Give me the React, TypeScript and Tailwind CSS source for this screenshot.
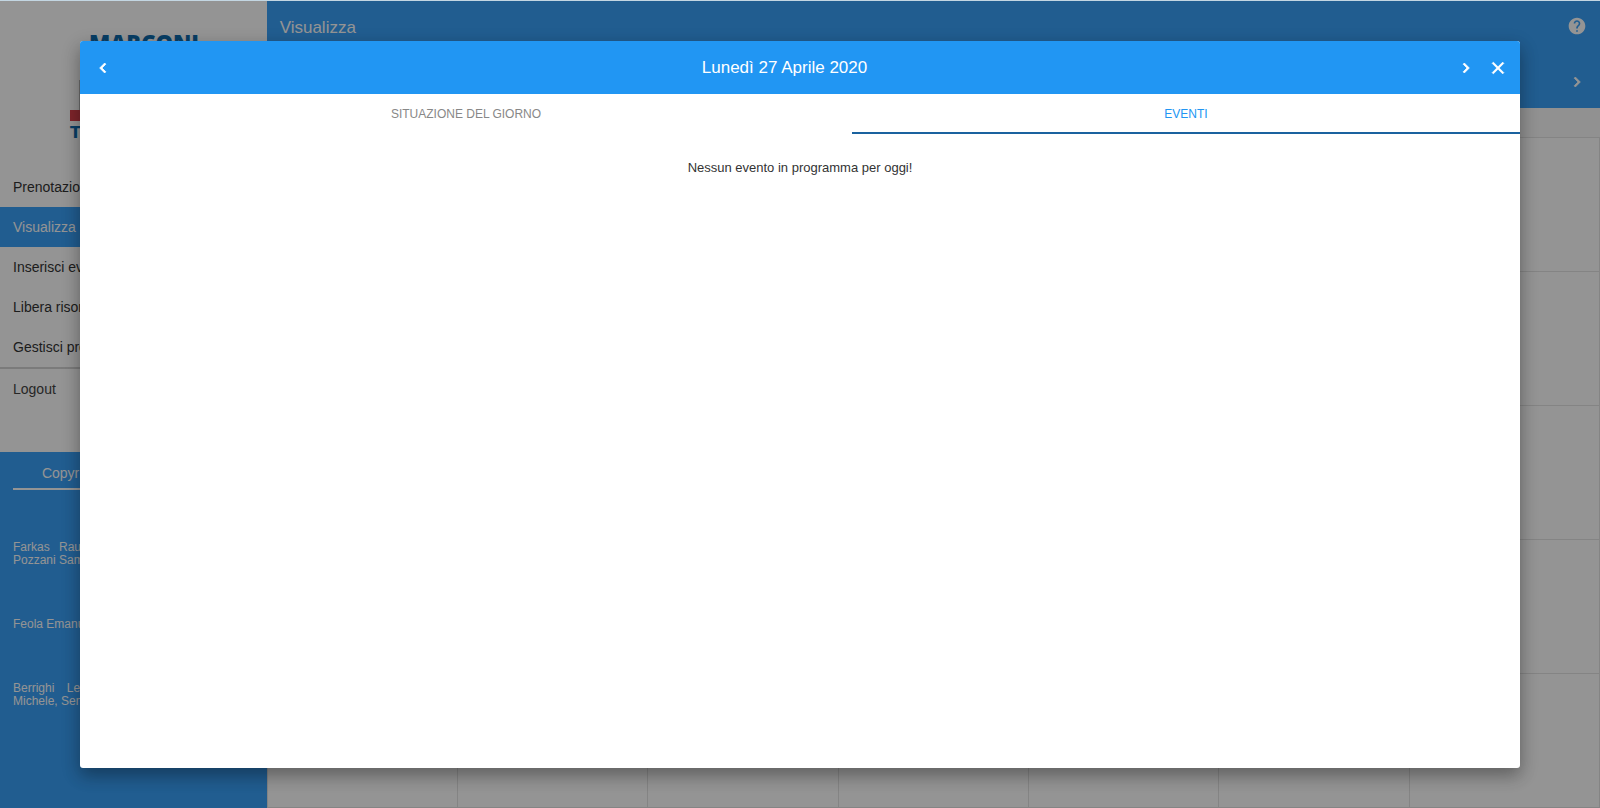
import { MdHelp } from "react-icons/md";

const links = [
  { label: "Prenotazioni", active: false },
  { label: "Visualizza", active: true },
  { label: "Inserisci evento", active: false },
  { label: "Libera risorse", active: false },
  { label: "Gestisci prenotazioni", active: false },
];

const credits = [
  "Farkas Raul, Rossi Luca, Zanoni Mario, Pozzani Samuele",
  "Feola Emanuele",
  "Berrighi Leonardo, Sala Davide, Tosini Michele, Sempreboni Luca",
];

const glyphs = {
  left: "M15.41 7.41 14 6l-6 6 6 6 1.41-1.41L10.83 12z",
  right: "M10 6 8.59 7.41 13.17 12l-4.58 4.59L10 18l6-6z",
  close:
    "M19 6.41 17.59 5 12 10.59 6.41 5 5 6.41 10.59 12 5 17.59 6.41 19 12 13.41 17.59 19 19 17.59 13.41 12z",
};

function Glyph({ name }: { name: keyof typeof glyphs }) {
  return (
    <svg width="20" height="20" viewBox="0 0 24 24" fill="currentColor" stroke="currentColor" strokeWidth="0.9" aria-hidden="true">
      <path d={glyphs[name]} />
    </svg>
  );
}

function Logo() {
  return (
    <div className="flex h-[166px] shrink-0 justify-center pt-7">
      <svg width="130" height="120" viewBox="0 0 130 120" role="img" aria-label="Marconi">
        <text x="76" y="22" textAnchor="middle" fontSize="22" fontWeight="800" fill="#0f6cae" fontFamily="Open Sans, Noto Sans, sans-serif">
          MARCONI
        </text>
        <rect x="11" y="51" width="108" height="30" fill="#bbb" />
        <rect x="2" y="81" width="126" height="11" fill="#d9404a" />
        <text x="2" y="109" fontSize="16" fontWeight="700" fill="#0f6cae" fontFamily="DejaVu Sans, sans-serif">
          TECNICO
        </text>
      </svg>
    </div>
  );
}

function Sidebar() {
  return (
    <aside className="flex w-1/6 shrink-0 flex-col bg-white">
      <Logo />
      <nav className="flex flex-col text-sm text-[#333]">
        {links.map((l) => (
          <a
            key={l.label}
            href="#"
            className={
              l.active
                ? "flex h-10 items-center bg-[#39a0f8] px-[13px] text-white"
                : "flex h-10 items-center px-[13px]"
            }
          >
            {l.label}
          </a>
        ))}
        <a href="#" className="flex h-[42px] items-center border-t-2 border-[#d4d4d4] px-[13px] text-[#444]">
          Logout
        </a>
      </nav>
      <footer className="mt-[43px] flex-1 bg-[#39a0f8] px-[13px] text-white">
        <div className="border-b-2 border-white pt-[11px] pb-[5px] text-center text-sm leading-5">
          Copyright © Team 2019-2020
        </div>
        {credits.map((names) => (
          <p key={names} className="mt-[51px] text-justify text-xs leading-[13px]">
            {names}
          </p>
        ))}
      </footer>
    </aside>
  );
}

function Calendar() {
  return (
    <main className="flex flex-1 flex-col bg-white">
      <header className="flex h-[107px] shrink-0 flex-col justify-between bg-[#39a0f8] px-[13px] text-white">
        <div className="flex h-[50px] items-center justify-between">
          <h1 className="pt-1 text-[17px]">Visualizza</h1>
          <button type="button" aria-label="Aiuto">
            <MdHelp size={20} />
          </button>
        </div>
        <div className="flex h-[52px] items-center justify-end">
          <button type="button" aria-label="Mese successivo">
            <Glyph name="right" />
          </button>
        </div>
      </header>
      <div className="h-[29px] shrink-0 bg-[#fafafa]" />
      <div className="grid flex-1 grid-cols-7 grid-rows-5 border-t border-l border-[#e4e4e4]">
        {Array.from({ length: 35 }, (_, i) => (
          <div key={i} className="border-r border-b border-[#e4e4e4]" />
        ))}
      </div>
    </main>
  );
}

function DayDialog() {
  return (
    <div className="absolute inset-0 flex items-center justify-center bg-black/42">
      <section
        role="dialog"
        aria-label="Lunedì 27 Aprile 2020"
        className="flex h-9/10 w-9/10 flex-col overflow-hidden rounded-[3px] bg-white shadow-[0_8px_16px_0_rgba(0,0,0,0.2),0_6px_20px_0_rgba(0,0,0,0.19)]"
      >
        <header className="flex h-[53px] shrink-0 items-center bg-[#2196f3] pr-3 pl-[13px] text-white">
          <button type="button" aria-label="Giorno precedente">
            <Glyph name="left" />
          </button>
          <h2 className="flex-1 text-center text-[17px]">Lunedì 27 Aprile 2020</h2>
          <div className="flex items-center gap-3">
            <button type="button" aria-label="Giorno successivo">
              <Glyph name="right" />
            </button>
            <button type="button" aria-label="Chiudi">
              <Glyph name="close" />
            </button>
          </div>
        </header>
        <div role="tablist" className="flex h-10 shrink-0 text-xs">
          <button
            type="button"
            role="tab"
            aria-selected="false"
            className="w-[772px] shrink border-b-2 border-transparent pt-[2px] text-[#888]"
          >
            SITUAZIONE DEL GIORNO
          </button>
          <button
            type="button"
            role="tab"
            aria-selected="true"
            className="flex-1 border-b-2 border-[#1a629f] pt-[2px] text-[#2196f3]"
          >
            EVENTI
          </button>
        </div>
        <p className="pt-6 text-center text-[13px] leading-5 text-[#333]">Nessun evento in programma per oggi!</p>
      </section>
    </div>
  );
}

export default function App() {
  return (
    <div className="relative flex min-h-screen border-t border-[#c3d6e2] font-['Liberation_Sans',Arial,sans-serif]">
      <Sidebar />
      <Calendar />
      <DayDialog />
    </div>
  );
}
